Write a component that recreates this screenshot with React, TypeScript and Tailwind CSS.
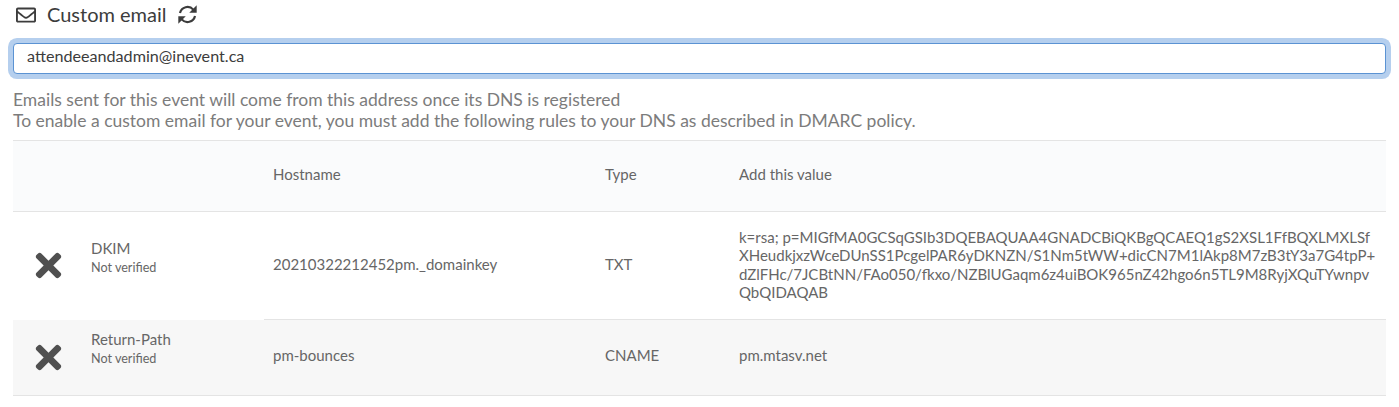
import { FaRegEnvelope, FaTimes } from "react-icons/fa";

const rows = [
  {
    name: "DKIM",
    host: "20210322212452pm._domainkey",
    type: "TXT",
    value: [
      "k=rsa; p=MIGfMA0GCSqGSIb3DQEBAQUAA4GNADCBiQKBgQCAEQ1gS2XSL1FfBQXLMXLSf",
      "XHeudkjxzWceDUnSS1PcgelPAR6yDKNZN/S1Nm5tWW+dicCN7M1lAkp8M7zB3tY3a7G4tpP+",
      "dZlFHc/7JCBtNN/FAo050/fkxo/NZBlUGaqm6z4uiBOK965nZ42hgo6n5TL9M8RyjXQuTYwnpv",
      "QbQIDAQAB",
    ],
  },
  {
    name: "Return-Path",
    host: "pm-bounces",
    type: "CNAME",
    value: ["pm.mtasv.net"],
  },
];

function RefreshIcon() {
  return (
    <svg viewBox="0 0 24 24" className="mb-[1px] ml-[10px] h-[21px] w-[21px]" fill="none">
      <path d="M3.4 10.2A8.8 8.8 0 0 1 18.6 6.4" stroke="currentColor" strokeWidth="2.5" />
      <path d="M20.6 13.8A8.8 8.8 0 0 1 5.4 17.6" stroke="currentColor" strokeWidth="2.5" />
      <path d="M22.5 1.5V10H14Z" fill="currentColor" />
      <path d="M1.5 22.5V14H10Z" fill="currentColor" />
    </svg>
  );
}

export default function App() {
  return (
    <div className="h-[407px] overflow-hidden bg-white font-['Lato',sans-serif] text-[15px] text-[#666]">
      <div className="flex h-[29px] items-center pl-[16px] text-[20px] text-[#3c3c3c]">
        <FaRegEnvelope className="h-[20px] w-[20px]" />
        <span className="mb-[2px] ml-[11px]">Custom email</span>
        <RefreshIcon />
      </div>
      <div className="mx-[13px] mt-[14px] flex h-[31px] items-center rounded-[4px] border border-[#5b93d3] bg-white px-[13px] pb-[4px] text-[16.15px] text-[#3c3c3c] shadow-[0_0_0_5px_#b5cfee]">
        attendeeandadmin@inevent.ca
      </div>
      <p className="mx-[13px] mt-[15px] text-[17.5px] leading-[21px] text-[#7c7c7c]">
        Emails sent for this event will come from this address once its DNS is registered
        <br />
        To enable a custom email for your event, you must add the following rules to your DNS as described in DMARC policy.
      </p>
      <table className="mx-[13px] mt-[9px] w-[1373px] table-fixed border-collapse">
        <colgroup>
          <col className="w-[70px]" />
          <col className="w-[181px]" />
          <col className="w-[332px]" />
          <col className="w-[134px]" />
          <col />
        </colgroup>
        <thead>
          <tr className="h-[71px] border-y border-[#e4e4e4] bg-[#fafbfc] text-left">
            <th />
            <th />
            <th className="pb-[3px] pl-[9px] font-normal">Hostname</th>
            <th className="pb-[3px] pl-[9px] font-normal">Type</th>
            <th className="pb-[3px] pl-[9px] font-normal">Add this value</th>
          </tr>
        </thead>
        <tbody>
          <Row row={rows[0]} rowClass="h-[108px]" cellClass="border-b border-[#e4e4e4] pb-[2px] pl-[9px]" />
          <Row
            row={rows[1]}
            rowClass="h-[76px] border-b border-[#e4e4e4] bg-[#f7f7f7]"
            cellClass="border-b border-[#e4e4e4] pb-[4px] pl-[9px]"
          />
        </tbody>
      </table>
    </div>
  );
}

function Row({ row, rowClass, cellClass }: { row: (typeof rows)[number]; rowClass: string; cellClass: string }) {
  return (
    <tr className={rowClass}>
      <td>
        <FaTimes className="ml-[17px] h-[37px] w-[37px] text-[#505050]" />
      </td>
      <td className="pb-[16px] pl-[8px]">
        <div className="text-[15px] leading-[19px]">{row.name}</div>
        <div className="mt-[1px] text-[12.6px] leading-[18px]">Not verified</div>
      </td>
      <td className={cellClass}>{row.host}</td>
      <td className={cellClass}>{row.type}</td>
      <td className={cellClass}>
        <div className="leading-[18.5px]">
          {row.value.map((line) => (
            <div key={line}>{line}</div>
          ))}
        </div>
      </td>
    </tr>
  );
}
